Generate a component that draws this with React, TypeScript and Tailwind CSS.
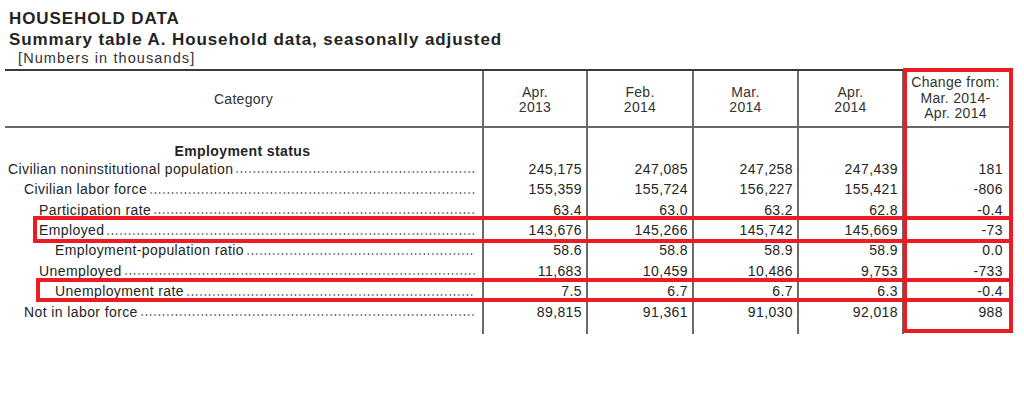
import React from "react";

const cols = "grid grid-cols-[479px_104px_106px_105px_105px_105px]";

type Row = { label: string; indent: string; vals: string[] };

const rows: Row[] = [
  { label: "Civilian noninstitutional population", indent: "pl-[3px]", vals: ["245,175", "247,085", "247,258", "247,439", "181"] },
  { label: "Civilian labor force", indent: "pl-[19px]", vals: ["155,359", "155,724", "156,227", "155,421", "-806"] },
  { label: "Participation rate", indent: "pl-[34px]", vals: ["63.4", "63.0", "63.2", "62.8", "-0.4"] },
  { label: "Employed", indent: "pl-[34px]", vals: ["143,676", "145,266", "145,742", "145,669", "-73"] },
  { label: "Employment-population ratio", indent: "pl-[50px]", vals: ["58.6", "58.8", "58.9", "58.9", "0.0"] },
  { label: "Unemployed", indent: "pl-[34px]", vals: ["11,683", "10,459", "10,486", "9,753", "-733"] },
  { label: "Unemployment rate", indent: "pl-[50px]", vals: ["7.5", "6.7", "6.7", "6.3", "-0.4"] },
  { label: "Not in labor force", indent: "pl-[19px]", vals: ["89,815", "91,361", "91,030", "92,018", "988"] },
];

const line = "border-r-2 border-[#6a6a6a]";

function SpacerRow({ h }: { h: string }) {
  return (
    <div className={`${cols} ${h}`}>
      <div className={line} />
      <div className={line} />
      <div className={line} />
      <div className={line} />
      <div className={line} />
      <div />
    </div>
  );
}

export default function App() {
  return (
    <div className="relative w-[1024px] h-[409px] bg-white text-[#242424] font-['Liberation_Sans',Arial,Helvetica,sans-serif] overflow-hidden">
      <div className="pl-[9px] pt-[9px] font-bold text-[17px] leading-[20.5px] tracking-[0.9px]">
        <div>HOUSEHOLD DATA</div>
        <div>Summary table A. Household data, seasonally adjusted</div>
      </div>
      <div className="pl-[18px] mt-[1px] text-[14.5px] leading-[15px] tracking-[1.1px] text-[#333]">
        [Numbers in thousands]
      </div>

      <div className="ml-[5px] mt-[3px] w-[1004px]">
        {/* header */}
        <div className={`${cols} h-[59px] border-t-2 border-b-2 border-t-[#3a3a3a] border-b-[#666] text-[14px] leading-[15px] tracking-[0.3px] text-[#333]`}>
          <div className={`${line} flex items-center justify-center pt-[2px]`}>Category</div>
          {[
            ["Apr.", "2013"],
            ["Feb.", "2014"],
            ["Mar.", "2014"],
            ["Apr.", "2014"],
          ].map((h, i) => (
            <div key={i} className={`${line} flex flex-col items-center justify-center pt-[2px]`}>
              <span>{h[0]}</span>
              <span>{h[1]}</span>
            </div>
          ))}
          <div className="flex flex-col items-center justify-center leading-[15.5px] pr-[2px]">
            <span>Change from:</span>
            <span>Mar. 2014-</span>
            <span>Apr. 2014</span>
          </div>
        </div>

        {/* body */}
        <div className="text-[14px] tracking-[0.4px]">
          <SpacerRow h="h-[15.8px]" />
          <div className={`${cols} h-[15px] leading-[15px]`}>
            <div className={`${line} text-center font-bold pr-[2px]`}>Employment status</div>
            <div className={line} />
            <div className={line} />
            <div className={line} />
            <div className={line} />
            <div />
          </div>
          {rows.map((r) => (
            <div key={r.label} className={`${cols} h-[20.4px] leading-[20.4px]`}>
              <div className={`${line} ${r.indent} pr-[7px] flex min-w-0`}>
                <span className="whitespace-nowrap">{r.label}</span>
                <span className="flex-1 min-w-0 self-start mt-[12.6px] ml-[2px] h-[2px] bg-[radial-gradient(circle,#666_0.7px,transparent_1.1px)] bg-[length:4.3px_2px] bg-repeat-x" />
              </div>
              {r.vals.slice(0, 4).map((v, i) => (
                <div key={i} className={`${line} text-right pr-[4px]`}>
                  {v}
                </div>
              ))}
              <div className="text-right pr-[6px]">{r.vals[4]}</div>
            </div>
          ))}
          <SpacerRow h="h-[12.5px]" />
        </div>
      </div>

      {/* red annotation boxes */}
      <div className="absolute left-[903px] top-[68px] w-[110px] h-[265px] border-4 border-[#ed1c24]" />
      <div className="absolute left-[33px] top-[216px] w-[980px] h-[27px] border-4 border-[#ed1c24]" />
      <div className="absolute left-[36px] top-[278px] w-[977px] h-[24px] border-4 border-[#ed1c24]" />
    </div>
  );
}
